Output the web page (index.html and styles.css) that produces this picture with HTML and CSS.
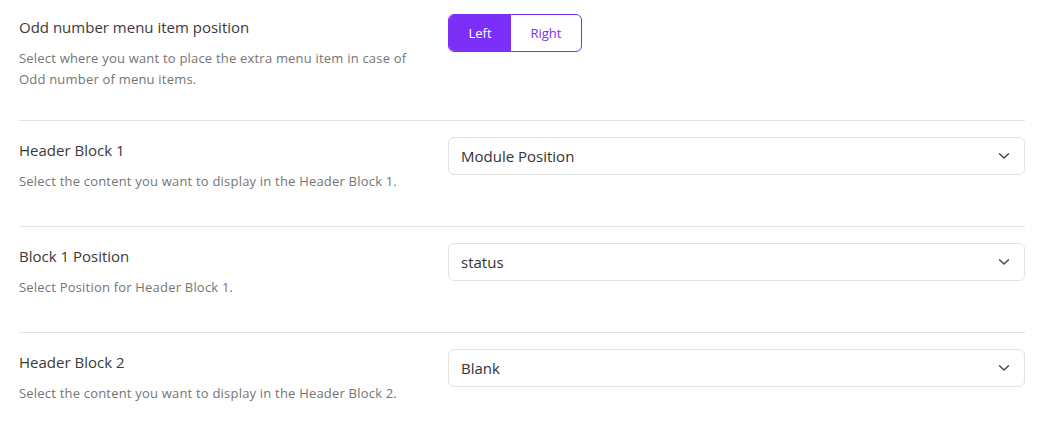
FILE: index.html
```html
<!DOCTYPE html>
<html lang="en">
<head>
<meta charset="utf-8">
<title>Settings</title>
<link rel="stylesheet" href="styles.css">
</head>
<body>
<div class="settings">
  <div class="row row-first">
    <div class="label">
      <div class="title">Odd number menu item position</div>
      <div class="desc">Select where you want to place the extra menu item in case of<br>Odd number of menu items.</div>
    </div>
    <div class="control">
      <div class="seg">
        <span class="seg-btn active">Left</span>
        <span class="seg-btn">Right</span>
      </div>
    </div>
  </div>
  <div class="row">
    <div class="label">
      <div class="title">Header Block 1</div>
      <div class="desc">Select the content you want to display in the Header Block 1.</div>
    </div>
    <div class="control">
      <div class="select"><span>Module Position</span>
        <svg class="chev" width="12" height="8" viewBox="0 0 12 8"><path d="M1.5 1.8 L6 6 L10.5 1.8" fill="none" stroke="#444" stroke-width="1.4" stroke-linecap="round" stroke-linejoin="round"/></svg>
      </div>
    </div>
  </div>
  <div class="row">
    <div class="label">
      <div class="title">Block 1 Position</div>
      <div class="desc">Select Position for Header Block 1.</div>
    </div>
    <div class="control">
      <div class="select"><span>status</span>
        <svg class="chev" width="12" height="8" viewBox="0 0 12 8"><path d="M1.5 1.8 L6 6 L10.5 1.8" fill="none" stroke="#444" stroke-width="1.4" stroke-linecap="round" stroke-linejoin="round"/></svg>
      </div>
    </div>
  </div>
  <div class="row row-last">
    <div class="label">
      <div class="title">Header Block 2</div>
      <div class="desc">Select the content you want to display in the Header Block 2.</div>
    </div>
    <div class="control">
      <div class="select"><span>Blank</span>
        <svg class="chev" width="12" height="8" viewBox="0 0 12 8"><path d="M1.5 1.8 L6 6 L10.5 1.8" fill="none" stroke="#444" stroke-width="1.4" stroke-linecap="round" stroke-linejoin="round"/></svg>
      </div>
    </div>
  </div>
</div>
</body>
</html>
```
FILE: styles.css
```css
html, body {
  margin: 0;
  padding: 0;
  background: #fff;
}
body {
  font-family: "Open Sans", "Noto Sans", sans-serif;
  color: #333;
}
.settings {
  padding: 0 18px 0 19px;
}
.row {
  display: flex;
  padding: 16px 0 34px;
  border-bottom: 1px solid #e3e3e3;
}
.row-first {
  padding-top: 14px;
  padding-bottom: 30px;
}
.row-last {
  border-bottom: none;
}
.label {
  width: 429px;
  flex: none;
  padding-top: 2px;
}
.title {
  font-size: 15px;
  line-height: 22px;
  color: #3a3a3a;
}
.desc {
  margin-top: 10px;
  font-size: 13px;
  line-height: 21px;
  letter-spacing: 0.2px;
  color: #757575;
}
.control {
  flex: 1;
}
.seg {
  display: inline-flex;
  height: 38px;
  box-sizing: border-box;
  border: 1px solid #7b2ff7;
  border-radius: 6px;
  overflow: hidden;
}
.seg-btn {
  display: flex;
  align-items: center;
  justify-content: center;
  font-size: 13px;
  color: #7b2ff7;
  width: 70px;
}
.seg-btn.active {
  width: 62px;
  background: #7b2ff7;
  color: #fff;
}
.select {
  height: 38px;
  box-sizing: border-box;
  border: 1px solid #e2e2e2;
  border-radius: 6px;
  display: flex;
  align-items: center;
  justify-content: space-between;
  padding: 0 14px 0 12px;
  font-size: 15px;
  color: #333;
}
.chev {
  display: block;
}
```
